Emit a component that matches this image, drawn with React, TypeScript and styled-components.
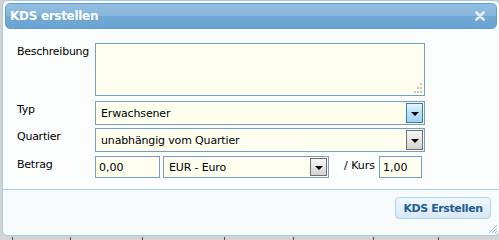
import styled, { createGlobalStyle } from 'styled-components';

const GlobalStyle = createGlobalStyle`
  html, body {
    margin: 0;
    padding: 0;
    background: #d2d2d2;
    overflow: hidden;
  }
  body {
    font-family: "DejaVu Sans", Verdana, sans-serif;
    font-size: 11px;
    color: #000;
  }
`;

const Page = styled.div`
  width: 499px;
  height: 240px;
  display: flex;
  flex-direction: column;
`;

const Window = styled.div`
  position: relative;
  margin-left: 2px;
  width: 498px;
  height: 236px;
  box-sizing: border-box;
  border: 1px solid #a8cbe8;
  border-radius: 6px;
  background: #fff;
  padding: 2px 2px 0 2px;
  display: flex;
  flex-direction: column;
  overflow: hidden;
`;

const TitleBar = styled.div`
  height: 26px;
  box-sizing: border-box;
  border: 1px solid #5f9dd4;
  border-radius: 5px;
  background: linear-gradient(to bottom, #92bfe2 0%, #86b6dc 50%, #71a8d5 52%, #6aa3d2 100%);
  display: flex;
  align-items: center;
  justify-content: space-between;
  padding: 0 11px 0 4px;
`;

const Title = styled.span`
  color: #fff;
  font-weight: bold;
  font-size: 12px;
  letter-spacing: -0.3px;
`;

const Close = styled.svg`
  width: 10px;
  height: 10px;
`;

const Form = styled.div`
  flex: 1;
  background: #fcfefe;
  padding: 14px 0 0 12px;
  display: flex;
  flex-direction: column;
`;

const Row = styled.div<{ $top: number }>`
  display: flex;
  align-items: flex-start;
  margin-top: ${p => p.$top}px;
`;

const Label = styled.div`
  width: 78px;
  padding-top: 2px;
  line-height: 14px;
  letter-spacing: -0.25px;
`;

const AreaWrap = styled.div`
  position: relative;
  width: 330px;
  height: 53px;
`;

const Area = styled.textarea`
  width: 100%;
  height: 100%;
  box-sizing: border-box;
  border: 1px solid #7a9cbe;
  background: #fffff0;
  resize: none;
  outline: none;
  margin: 0;
  display: block;
`;

const Grip = styled.svg`
  position: absolute;
  right: 2px;
  bottom: 2px;
  width: 10px;
  height: 13px;
`;

const Select = styled.div<{ $width: number; $height: number }>`
  width: ${p => p.$width}px;
  height: ${p => p.$height}px;
  box-sizing: border-box;
  border: 1px solid #7a9cbe;
  background: #fffff0;
  display: flex;
  align-items: center;
  justify-content: space-between;
  padding: 0 1px 0 5px;
  letter-spacing: -0.15px;
`;

const DropButton = styled.div<{ $active?: boolean }>`
  width: 17px;
  height: calc(100% - 2px);
  box-sizing: border-box;
  border: 1px solid ${p => (p.$active ? '#3d7bad' : '#6f6f6f')};
  background: ${p =>
    p.$active
      ? 'linear-gradient(to bottom, #e6f4fc 0%, #b9e0f7 50%, #a2d4f2 100%)'
      : 'linear-gradient(to bottom, #f6f6f6 0%, #e6e6e6 50%, #d2d2d2 100%)'};
  display: flex;
  align-items: center;
  justify-content: center;
  &::after {
    content: '';
    border-left: 4px solid transparent;
    border-right: 4px solid transparent;
    border-top: 4px solid #000;
    margin-top: 2px;
  }
`;

const Input = styled.input<{ $width: number }>`
  width: ${p => p.$width}px;
  height: 22px;
  box-sizing: border-box;
  border: 1px solid #7a9cbe;
  background: #fffff0;
  font-family: inherit;
  font-size: 11px;
  padding: 0 3px;
  margin: 0;
  outline: none;
`;

const Kurs = styled.span`
  margin: 3px 4px 0 15px;
  line-height: 14px;
`;

const Footer = styled.div`
  height: 38px;
  border-top: 1px solid #a9cde9;
  background: #f8fbfb;
  display: flex;
  justify-content: flex-end;
  align-items: flex-start;
  padding: 7px 8px 0 0;
  box-sizing: content-box;
  margin: 0 -2px;
`;

const Button = styled.button`
  width: 96px;
  height: 22px;
  border: 1px solid #b4d2ea;
  border-radius: 4px;
  background: linear-gradient(to bottom, #f0f7fc 0%, #e3eff9 50%, #d6e8f6 100%);
  color: #245b92;
  font-family: inherit;
  font-weight: bold;
  font-size: 11px;
  letter-spacing: -0.4px;
  padding: 0;
`;

const ResizeGrip = styled.svg`
  position: absolute;
  right: 1px;
  bottom: 1px;
  width: 12px;
  height: 12px;
`;

const Backdrop = styled.div`
  display: flex;
  height: 4px;
  background: #d4d4d4;
`;

const Tick = styled.div<{ $w: number }>`
  width: ${p => p.$w}px;
  border-right: 1px solid #505050;
  box-sizing: border-box;
  margin-top: 1px;
`;

const ticks = [13, 58, 72, 82, 69, 80, 65];

export default function App() {
  return (
    <Page>
      <GlobalStyle />
      <Window>
        <TitleBar>
          <Title>KDS erstellen</Title>
          <Close viewBox="0 0 10 10">
            <path d="M1.5 1.5 L8.5 8.5 M8.5 1.5 L1.5 8.5" stroke="#e6edf4" strokeWidth="2.6" strokeLinecap="round" />
          </Close>
        </TitleBar>
        <Form>
          <Row $top={0}>
            <Label>Beschreibung</Label>
            <AreaWrap>
              <Area />
              <Grip viewBox="0 0 10 13">
                <g fill="#c4c4c4">
                  <rect x="7" y="2" width="2" height="2" />
                  <rect x="4" y="6" width="2" height="2" />
                  <rect x="7" y="6" width="2" height="2" />
                  <rect x="1" y="10" width="2" height="2" />
                  <rect x="4" y="10" width="2" height="2" />
                  <rect x="7" y="10" width="2" height="2" />
                </g>
              </Grip>
            </AreaWrap>
          </Row>
          <Row $top={5}>
            <Label>Typ</Label>
            <Select $width={330} $height={24}>
              <span>Erwachsener</span>
              <DropButton $active />
            </Select>
          </Row>
          <Row $top={3}>
            <Label>Quartier</Label>
            <Select $width={330} $height={24}>
              <span>unabhängig vom Quartier</span>
              <DropButton />
            </Select>
          </Row>
          <Row $top={4}>
            <Label>Betrag</Label>
            <Input $width={65} defaultValue="0,00" />
            <Select $width={166} $height={22} style={{ marginLeft: 3 }}>
              <span>EUR - Euro</span>
              <DropButton />
            </Select>
            <Kurs>/ Kurs</Kurs>
            <Input $width={43} defaultValue="1,00" />
          </Row>
        </Form>
        <Footer>
          <Button>KDS Erstellen</Button>
        </Footer>
        <ResizeGrip viewBox="0 0 12 12">
          <path d="M11 3 L3 11 M11 6 L6 11 M11 9 L9 11" stroke="#9cc4e4" strokeWidth="1" />
        </ResizeGrip>
      </Window>
      <Backdrop>
        {ticks.map((w, i) => (
          <Tick key={i} $w={w} />
        ))}
      </Backdrop>
    </Page>
  );
}
